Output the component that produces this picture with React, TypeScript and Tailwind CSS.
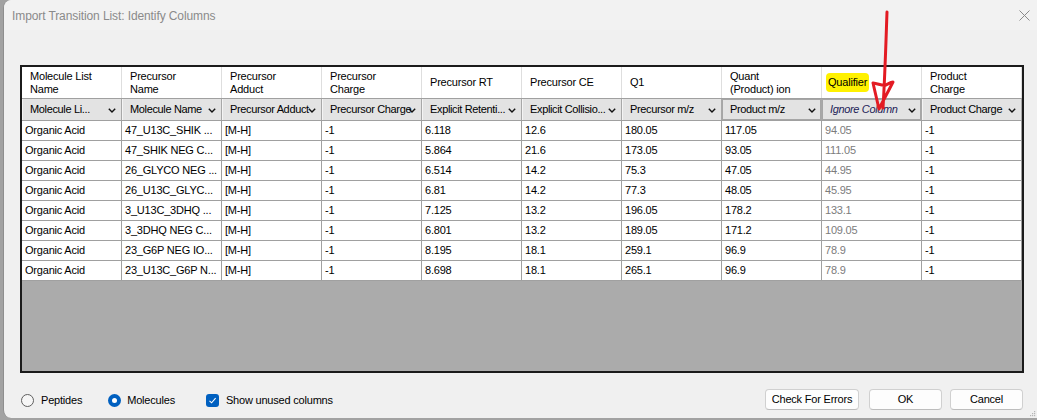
import React from "react";

const head1: string[][] = [
  ["Molecule List", "Name"],
  ["Precursor", "Name"],
  ["Precursor", "Adduct"],
  ["Precursor", "Charge"],
  ["Precursor RT"],
  ["Precursor CE"],
  ["Q1"],
  ["Quant", "(Product) ion"],
  ["Qualifier"],
  ["Product", "Charge"],
];

const head2 = [
  "Molecule Li...",
  "Molecule Name",
  "Precursor Adduct",
  "Precursor Charge",
  "Explicit Retenti...",
  "Explicit Collisio...",
  "Precursor m/z",
  "Product m/z",
  "Ignore Column",
  "Product Charge",
];

const rows: string[][] = [
  ["Organic Acid", "47_U13C_SHIK ...", "[M-H]", "-1", "6.118", "12.6", "180.05", "117.05", "94.05", "-1"],
  ["Organic Acid", "47_SHIK NEG C...", "[M-H]", "-1", "5.864", "21.6", "173.05", "93.05", "111.05", "-1"],
  ["Organic Acid", "26_GLYCO NEG ...", "[M-H]", "-1", "6.514", "14.2", "75.3", "47.05", "44.95", "-1"],
  ["Organic Acid", "26_U13C_GLYC...", "[M-H]", "-1", "6.81", "14.2", "77.3", "48.05", "45.95", "-1"],
  ["Organic Acid", "3_U13C_3DHQ ...", "[M-H]", "-1", "7.125", "13.2", "196.05", "178.2", "133.1", "-1"],
  ["Organic Acid", "3_3DHQ NEG C...", "[M-H]", "-1", "6.801", "13.2", "189.05", "171.2", "109.05", "-1"],
  ["Organic Acid", "23_G6P NEG IO...", "[M-H]", "-1", "8.195", "18.1", "259.1", "96.9", "78.9", "-1"],
  ["Organic Acid", "23_U13C_G6P N...", "[M-H]", "-1", "8.698", "18.1", "265.1", "96.9", "78.9", "-1"],
];

function Chev() {
  return (
    <svg width="8" height="5" viewBox="0 0 8 5" className="absolute right-[5px] top-[9px]">
      <path d="M0.8 0.8L4 4L7.2 0.8" fill="none" stroke="#111" strokeWidth="1.4" />
    </svg>
  );
}

export default function App() {
  return (
    <div className="relative w-[1037px] h-[420px] overflow-hidden bg-[#a2a2a2] font-['Liberation_Sans',Arial,sans-serif] text-[11px] tracking-[-0.2px] text-black">
      <div className="ml-[3px] h-[418px] rounded-tl-[8px] rounded-bl-[8px] border-l border-[#8e8e8e] bg-[#f0f0f0] flex flex-col">
        {/* title bar */}
        <div className="h-[30px] flex items-center justify-between pl-[8px] pr-[6px] pt-[1px] rounded-tl-[8px] bg-[#f2f2f2]">
          <span className="text-[12px] text-[#8a8a8a] tracking-[-0.1px]">Import Transition List: Identify Columns</span>
          <svg width="11" height="11" viewBox="0 0 11 11" className="mr-[1px]">
            <path d="M0.5 0.5L10.5 10.5M10.5 0.5L0.5 10.5" stroke="#8a8a8a" strokeWidth="1" />
          </svg>
        </div>

        <div className="pl-[16px] flex flex-col">
          {/* grid */}
          <div className="mt-[35px] w-[1004px] h-[308px] border-2 border-[#1b1b1b] bg-[#ababab] flex flex-col">
            <div className="flex h-[32px] bg-white border-b border-[#a0a0a0]">
              {head1.map((h, i) => (
                <div key={i} className="w-[100px] shrink-0 border-r border-[#dedede] flex items-center pl-[8px] leading-[13px]">
                  {i === 8 ? (
                    <span className="-ml-[4px] px-[2px] py-[3px] rounded-[4px] bg-[#fff100]">Qualifier</span>
                  ) : (
                    <div className="flex flex-col">
                      {h.map((t, j) => (
                        <span key={j}>{t}</span>
                      ))}
                    </div>
                  )}
                </div>
              ))}
            </div>
            <div className="flex h-[22px] bg-[#e3e3e3] border-b border-[#a0a0a0]">
              {head2.map((h, i) => (
                <div
                  key={i}
                  className={
                    "relative w-[100px] shrink-0 border-r border-[#a8a8a8] flex items-center pl-[8px] tracking-[-0.35px] " +
                    (i === 7 || i === 8 ? "shadow-[inset_0_0_0_1px_#a6a6a6]" : "shadow-[inset_1px_0_0_0_#f4f4f4]")
                  }
                >
                  <span className={"whitespace-nowrap " + (i === 8 ? "italic text-[#1d1d58]" : "")}>{h}</span>
                  <Chev />
                </div>
              ))}
            </div>
            {rows.map((r, ri) => (
              <div key={ri} className="flex h-[20px] bg-white border-b border-[#a0a0a0]">
                {r.map((c, ci) => (
                  <div
                    key={ci}
                    className={
                      "w-[100px] shrink-0 border-r border-[#a0a0a0] flex items-center pl-[3px] whitespace-nowrap " +
                      (ci === 8 ? "text-[#7c7c7c]" : "")
                    }
                  >
                    {c}
                  </div>
                ))}
              </div>
            ))}
          </div>

          {/* bottom controls */}
          <div className="mt-[16px] h-[21px] flex items-center pr-[14px]">
            <div className="ml-[1px] mt-[1px] flex items-center">
              <span className="w-[13px] h-[13px] rounded-full border border-[#5f5f5f] bg-[#f6f6f6]" />
              <span className="ml-[7px]">Peptides</span>
              <span className="ml-[26px] w-[13px] h-[13px] rounded-full bg-[#0060c0] flex items-center justify-center">
                <span className="w-[5px] h-[5px] rounded-full bg-white" />
              </span>
              <span className="ml-[6px]">Molecules</span>
              <span className="ml-[31px] w-[13px] h-[13px] rounded-[3px] bg-[#0060c0] flex items-center justify-center">
                <svg width="9" height="9" viewBox="0 0 9 9">
                  <path d="M1.5 4.8L3.6 6.8L7.6 2.2" fill="none" stroke="#fff" strokeWidth="1.1" />
                </svg>
              </span>
              <span className="ml-[7px]">Show unused columns</span>
            </div>
            <div className="ml-auto flex items-center">
              <button className="w-[94px] h-[21px] rounded-[4px] border border-[#d0d0d0] border-b-[#bdbdbd] bg-[#fdfdfd]">Check For Errors</button>
              <button className="ml-[10px] w-[73px] h-[21px] rounded-[4px] border border-[#d0d0d0] border-b-[#bdbdbd] bg-[#fdfdfd]">OK</button>
              <button className="ml-[8px] w-[73px] h-[21px] rounded-[4px] border border-[#d0d0d0] border-b-[#bdbdbd] bg-[#fdfdfd]">Cancel</button>
            </div>
          </div>
        </div>
      </div>

      {/* resize grip */}
      <svg className="absolute right-[1px] bottom-[2px]" width="7" height="7" viewBox="0 0 7 7">
        <rect x="5" y="0" width="1.2" height="1.2" fill="#b5b5b5" />
        <rect x="3" y="2" width="1.2" height="1.2" fill="#b5b5b5" />
        <rect x="5" y="2" width="1.2" height="1.2" fill="#b5b5b5" />
        <rect x="1" y="4" width="1.2" height="1.2" fill="#b5b5b5" />
        <rect x="3" y="4" width="1.2" height="1.2" fill="#b5b5b5" />
        <rect x="5" y="4" width="1.2" height="1.2" fill="#b5b5b5" />
      </svg>

      {/* red annotation arrow */}
      <svg className="absolute left-0 top-0 pointer-events-none" width="1037" height="420" viewBox="0 0 1037 420">
        <path
          d="M887 12 C886 40 885 75 883 108 M873 83 C879 84 883 86 886 85 C888 84 891 82 893 82 C889 90 884 99 879 109 C877 100 875 92 873 83"
          fill="none"
          stroke="#e31b23"
          strokeWidth="3"
          strokeLinecap="round"
          strokeLinejoin="round"
        />
      </svg>
    </div>
  );
}
